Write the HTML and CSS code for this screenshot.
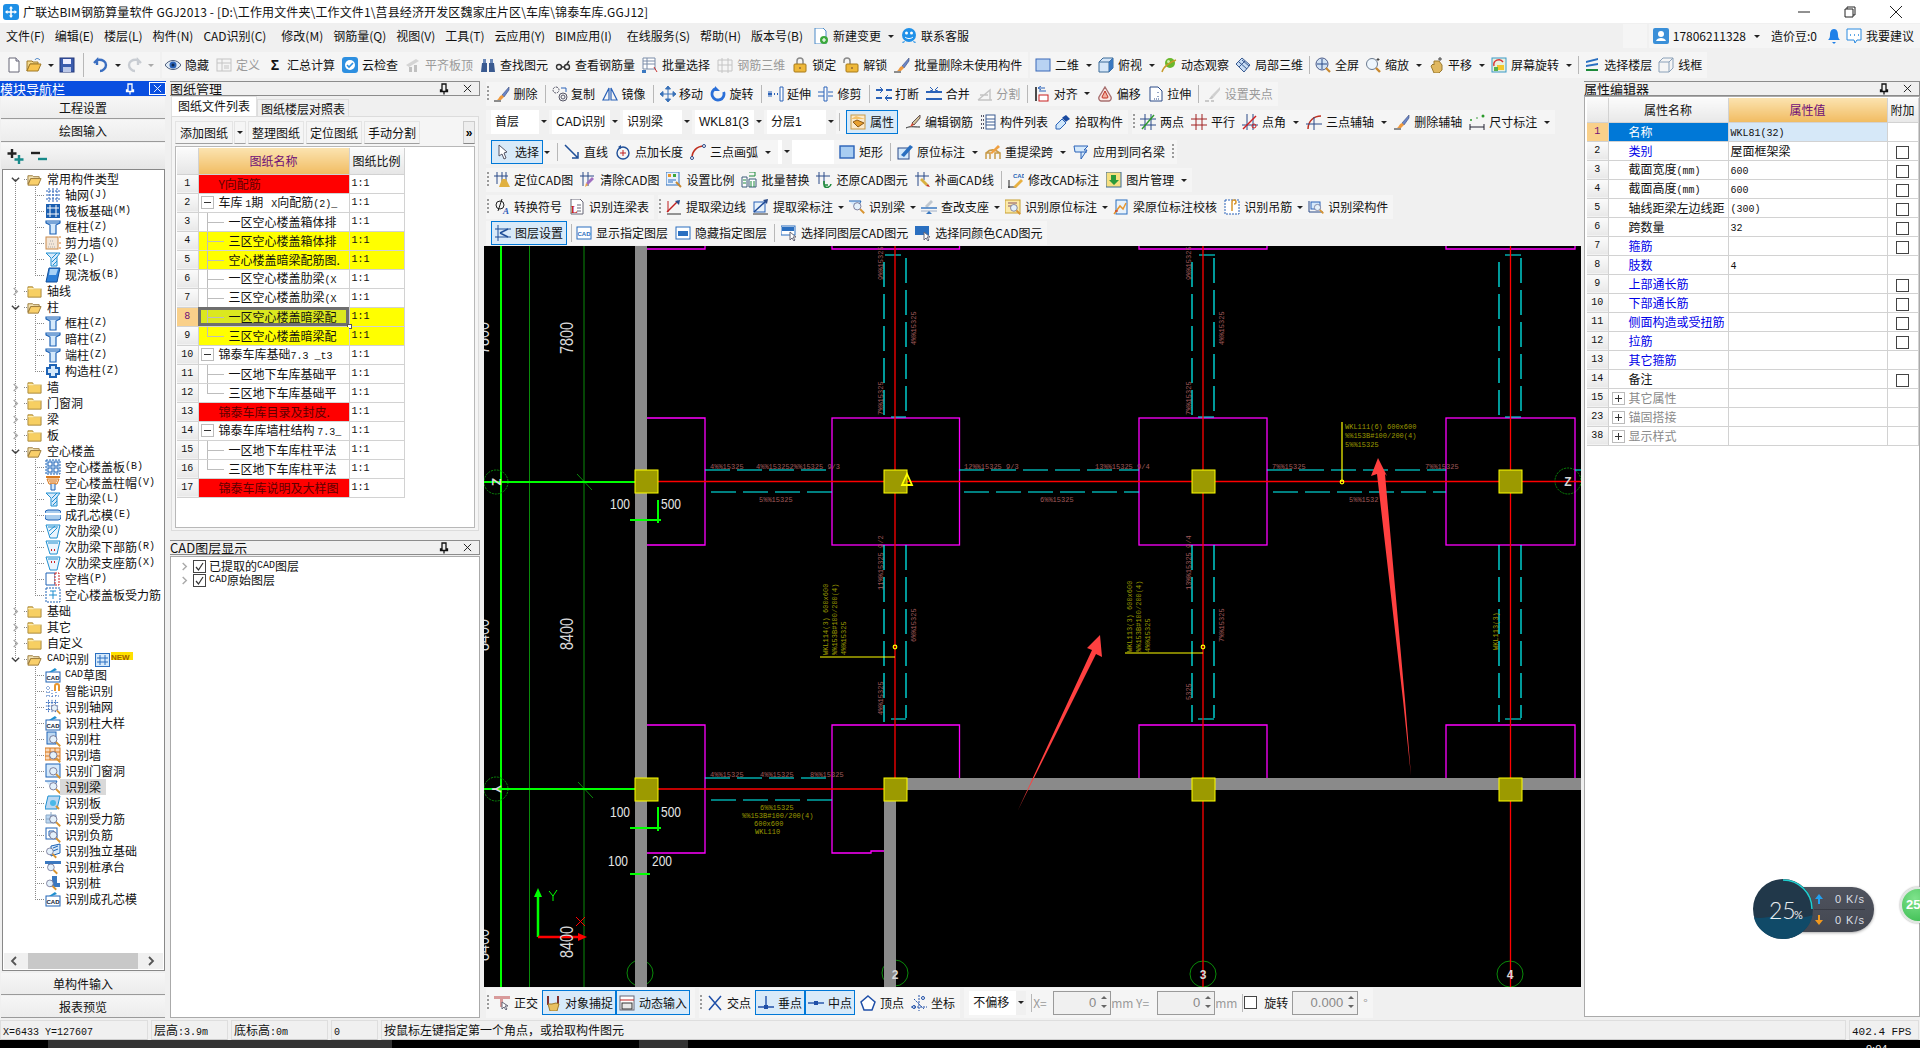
FILE: index.html
```html
<!DOCTYPE html>
<html lang="zh-CN">
<head>
<meta charset="utf-8">
<title>广联达BIM钢筋算量软件 GGJ2013</title>
<link rel="stylesheet" href="styles.css">
</head>
<body>
<svg class="defs" aria-hidden="true">
<symbol id="logo" viewBox="0 0 16 16"><rect width="16" height="16" rx="3" fill="#1e8fe6"/><path d="M8 3v10M3 8h10" stroke="#fff" stroke-width="1.6"/><path d="M8 2l-2 2.5h4zM8 14l-2-2.5h4zM2 8l2.5-2v4zM14 8l-2.5-2v4z" fill="#fff"/></symbol>
<symbol id="fo" viewBox="0 0 16 16"><path d="M1 4h5l1 1h6v2H4L1 13z" fill="#f3e3b4" stroke="#9a7a3a"/><path d="M4 7h11l-3 7H1z" fill="#f9cf6a" stroke="#9a7a3a"/></symbol>
<symbol id="fc" viewBox="0 0 16 16"><path d="M1 3h5l1 2h8v9H1z" fill="#f7cf62" stroke="#a8883e"/><path d="M1 5h14" stroke="#fff3c4"/></symbol>
<symbol id="chd" viewBox="0 0 10 10"><path d="M1 3l4 4 4-4" fill="none" stroke="#444" stroke-width="1.6"/></symbol>
<symbol id="chr" viewBox="0 0 10 10"><path d="M3 1l4 4-4 4" fill="none" stroke="#aaa" stroke-width="1.6"/></symbol>
<symbol id="axis" viewBox="0 0 16 16"><path d="M1 4h14M1 8h14M1 12h14M4 1v14M8 1v14M12 1v14" stroke="#2a62b8" stroke-dasharray="2 1" fill="none"/></symbol>
<symbol id="raft" viewBox="0 0 16 16"><rect x="1" y="1" width="14" height="14" fill="#1b5fb0"/><path d="M2 5h12M2 11h12M5 2v12M11 2v12" stroke="#fff"/></symbol>
<symbol id="col" viewBox="0 0 16 16"><path d="M1 2h14v2l-4 2v9H5V6L1 4z" fill="#d5e9fb" stroke="#1f63b5" stroke-width="1.2"/><path d="M1 4h14" stroke="#1f63b5"/></symbol>
<symbol id="wall" viewBox="0 0 16 16"><rect x="1" y="2" width="12" height="12" fill="#f3e6d8" stroke="#c98a4a"/><path d="M3 12h8M4 9h6M5 6h3" stroke="#aaa" stroke-dasharray="1 1"/><path d="M14 2h2M14 8h2M14 13h2" stroke="#d87a20"/></symbol>
<symbol id="beam" viewBox="0 0 16 16"><path d="M1 2h14l-3 4v9H6V7z" fill="#d5e9fb" stroke="#1f8fd0"/><path d="M7 7l5-5M7 11l5-5M8 14l4-4" stroke="#1f8fd0"/></symbol>
<symbol id="slab" viewBox="0 0 16 16"><path d="M4 1h11l-3 14H1z" fill="#2c7fd8" stroke="#114f9a"/><path d="M5 2h8l-2 6H4z" fill="#a8d2f6"/></symbol>
<symbol id="cols" viewBox="0 0 16 16"><path d="M4 1h8v3h3v8h-3v3H4v-3H1V4h3z" fill="#1f63b5"/><path d="M6 3h4v10H6zM3 6h10v4H3z" fill="#d5e9fb"/></symbol>
<symbol id="hslab" viewBox="0 0 16 16"><rect x="1" y="1" width="14" height="14" fill="#cfe4f8" stroke="#1f63b5" stroke-dasharray="2 1"/><rect x="3" y="3" width="4" height="4" fill="#fff" stroke="#1f63b5"/><rect x="9" y="3" width="4" height="4" fill="#fff" stroke="#1f63b5"/><rect x="3" y="9" width="4" height="4" fill="#fff" stroke="#1f63b5"/><rect x="9" y="9" width="4" height="4" fill="#fff" stroke="#1f63b5"/></symbol>
<symbol id="cap" viewBox="0 0 16 16"><path d="M1 2h14" stroke="#d87a20" stroke-width="2"/><path d="M2 4l2 5h8l2-5z" fill="#fbe4cf" stroke="#d87a20"/><path d="M4 6h8M5 8h6" stroke="#d87a20"/><path d="M6 9v6h4V9" fill="#d5e9fb" stroke="#1f63b5"/></symbol>
<symbol id="core" viewBox="0 0 16 16"><rect x="0" y="3" width="16" height="10" rx="3" fill="#a9cdee" stroke="#1f63b5"/><path d="M0 7h16" stroke="#fff" stroke-width="2"/></symbol>
<symbol id="sub" viewBox="0 0 16 16"><path d="M1 2h14l-3 13H5z" fill="#eaf4fd" stroke="#1f8fd0"/><path d="M3 4h10M4 8l6-5M5 12l7-7" stroke="#1f8fd0"/></symbol>
<symbol id="subd" viewBox="0 0 16 16"><path d="M1 2h14l-3 13H5z" fill="#eaf4fd" stroke="#1f8fd0"/><path d="M3 4h10" stroke="#1f8fd0"/><path d="M6 11h1M9 11h1" stroke="#d02020" stroke-width="2"/></symbol>
<symbol id="subu" viewBox="0 0 16 16"><path d="M1 2h14l-3 13H5z" fill="#eaf4fd" stroke="#1f8fd0"/><path d="M3 4h10" stroke="#1f8fd0"/><path d="M6 7h1M9 7h1" stroke="#d02020" stroke-width="2"/></symbol>
<symbol id="gap" viewBox="0 0 16 16"><path d="M1 2h9v12H1z" fill="#fff" stroke="#1f63b5"/><path d="M10 2h4v12h-4z" fill="#fff" stroke="#c82020" stroke-dasharray="2 1"/></symbol>
<symbol id="srb" viewBox="0 0 16 16"><rect x="1" y="1" width="14" height="14" fill="#fff" stroke="#1f63b5" stroke-dasharray="2 1"/><path d="M4 8h8M8 4v8M5 4h6" stroke="#1f8fd0"/></symbol>
<symbol id="mg" viewBox="0 0 16 16"><circle cx="6.5" cy="6.5" r="4.5" fill="#e4f1fb" stroke="#668"/><path d="M10 10l5 5" stroke="#d89430" stroke-width="2.4"/></symbol>
<symbol id="smart" viewBox="0 0 16 16"><path d="M1 5h5M1 9h5M1 13h14M3 3v12M7 7v8M11 9v6" stroke="#2a62b8" stroke-dasharray="1 2"/><path d="M9 8V3a3 3 0 0 1 6 0v5h-2V3a1 1 0 0 0-2 0v5z" fill="#e8962e"/></symbol>
<symbol id="raxis" viewBox="0 0 16 16"><use href="#axis" width="14" height="14"/><use href="#mg" x="5" y="4" width="11" height="12"/></symbol>
<symbol id="rcol" viewBox="0 0 16 16"><rect x="2" y="1" width="9" height="12" fill="#bcd8f2" stroke="#1f63b5"/><use href="#mg" x="3" y="3" width="13" height="13"/></symbol>
<symbol id="rwall" viewBox="0 0 16 16"><rect x="0" y="1" width="15" height="12" fill="#fbd9b8" stroke="#d87a20"/><path d="M0 5h15M0 9h15M5 1v12M10 1v12" stroke="#d87a20"/><use href="#mg" x="3" y="3" width="13" height="13"/></symbol>
<symbol id="rdoor" viewBox="0 0 16 16"><rect x="1" y="1" width="14" height="13" fill="#d5e9fb" stroke="#1f63b5"/><use href="#mg" x="3" y="3" width="13" height="13"/></symbol>
<symbol id="rbeam" viewBox="0 0 16 16"><path d="M0 2h12l-4 8" fill="#d5e9fb" stroke="#1f63b5"/><use href="#mg" x="3" y="2" width="13" height="13"/></symbol>
<symbol id="rslab" viewBox="0 0 16 16"><path d="M3 1h12l-3 13H0z" fill="#bcd8f2" stroke="#1f8fd0"/><circle cx="8" cy="8" r="3" fill="#4ab8e8"/><path d="M11 11l3 3" stroke="#d89430" stroke-width="2"/></symbol>
<symbol id="rreb" viewBox="0 0 16 16"><path d="M1 4h10v8H1z" fill="#bcd8f2" stroke="#8aa8c8"/><path d="M6 1v11M1 8h10" stroke="#8aa8c8"/><use href="#mg" x="3" y="3" width="13" height="13"/></symbol>
<symbol id="rneg" viewBox="0 0 16 16"><rect x="1" y="1" width="11" height="11" fill="#fff" stroke="#1f63b5"/><path d="M4 4h5v5H4z" fill="none" stroke="#1f63b5"/><use href="#mg" x="3" y="3" width="13" height="13"/></symbol>
<symbol id="rfnd" viewBox="0 0 16 16"><path d="M6 3l9-2v9l-9 3z" fill="#d5e9fb" stroke="#1f63b5"/><path d="M8 5l5-2M8 8l5-2" stroke="#1f63b5"/><use href="#mg" x="0" y="3" width="12" height="13"/></symbol>
<symbol id="rcap" viewBox="0 0 16 16"><path d="M0 2h16v3H6v5H3V5H0z" fill="#3a78c0"/><use href="#mg" x="1" y="3" width="12" height="13"/></symbol>
<symbol id="rpile" viewBox="0 0 16 16"><path d="M7 1h5v7h3v4H5V8h2z" fill="#3a78c0"/><use href="#mg" x="0" y="3" width="12" height="13"/></symbol>
<symbol id="pin" viewBox="0 0 10 12"><path d="M3 1h4v6h1.500v1.500h-7V7H3z" fill="none" stroke="currentColor" stroke-width="1.300"/><path d="M5 8v3.500" stroke="currentColor" stroke-width="1.300"/></symbol>
<symbol id="x" viewBox="0 0 10 10"><path d="M1 1l8 8M9 1L1 9" stroke="currentColor"/></symbol>
<symbol id="doc" viewBox="0 0 16 16"><path d="M3 1h7l3 3v11H3z" fill="#fff" stroke="#667"/><path d="M10 1v3h3" fill="#dde" stroke="#667"/></symbol>
<symbol id="open" viewBox="0 0 16 16"><path d="M1 4h5l1 1h5v2H4L1 14z" fill="#f4d98b" stroke="#a07a28"/><path d="M4 7h11l-3 7H1z" fill="#f8c34e" stroke="#a07a28"/><path d="M9 3c1-2 3-2 5 0" fill="none" stroke="#3a78c0"/></symbol>
<symbol id="save" viewBox="0 0 16 16"><rect x="1" y="1" width="14" height="14" fill="#3b5cad" stroke="#24387a"/><rect x="4" y="2" width="8" height="5" fill="#eef"/><rect x="4" y="10" width="8" height="5" fill="#bcc8e8"/></symbol>
<symbol id="undo" viewBox="0 0 16 16"><path d="M4 8V3L1 6M4 3c6-1 9 2 9 5s-3 6-6 6" fill="none" stroke="#3a6ec0" stroke-width="2.400"/></symbol>
<symbol id="redo" viewBox="0 0 16 16"><path d="M12 8V3l3 3M12 3C6 2 3 5 3 8s3 6 6 6" fill="none" stroke="#c8ccd2" stroke-width="2.400"/></symbol>
<symbol id="eye" viewBox="0 0 16 16"><path d="M0 8c4-6 12-6 16 0-4 6-12 6-16 0z" fill="#dfeaf5" stroke="#4a5a7a"/><circle cx="8" cy="8" r="3.500" fill="#2a62b8"/><circle cx="8" cy="8" r="1.500" fill="#102a50"/></symbol>
<symbol id="def" viewBox="0 0 16 16"><rect x="1" y="2" width="14" height="12" fill="#f4f4f4" stroke="#c4c4c4"/><path d="M1 6h14M6 2v12M8 9h5M8 11h5" stroke="#c4c4c4"/></symbol>
<symbol id="cloudc" viewBox="0 0 16 16"><rect x="0" y="0" width="16" height="16" rx="3" fill="#2d8fe0"/><circle cx="8" cy="8" r="5" fill="#fff"/><path d="M5 8l2 2 4-4" fill="none" stroke="#2d8fe0" stroke-width="1.600"/></symbol>
<symbol id="flat" viewBox="0 0 16 16"><path d="M1 8l10-6 3 2-10 6z" fill="#d4d4d4"/><path d="M4 10h3v5H4zM9 8h3v7H9z" fill="#c0c0c0"/></symbol>
<symbol id="binoc" viewBox="0 0 16 16"><path d="M2 6h5v9H1zM9 6h5l1 9H9z" fill="#3a5a90"/><path d="M3 2h3v4H3zM10 2h3v4h-3z" fill="#6a88b8"/></symbol>
<symbol id="glass" viewBox="0 0 16 16"><circle cx="4" cy="10" r="2.500" fill="none" stroke="#333" stroke-width="1.400"/><circle cx="12" cy="10" r="2.500" fill="none" stroke="#333" stroke-width="1.400"/><path d="M6.500 10h3M12 7l2-3" stroke="#333" stroke-width="1.400"/></symbol>
<symbol id="bsel" viewBox="0 0 16 16"><path d="M1 1h12v11H1zM1 4h12M1 7h12M5 1v11" fill="#fff" stroke="#7a8ca8"/><path d="M0 13h4v3H0z" fill="#3a78c0"/><path d="M12 10l3 5" stroke="#c83030"/></symbol>
<symbol id="r3d" viewBox="0 0 16 16"><path d="M1 3h14v11H1zM5 1v15M11 1v15M1 8h14" fill="none" stroke="#c4c4c4"/></symbol>
<symbol id="lock" viewBox="0 0 16 16"><path d="M5 7V4a3 3 0 0 1 6 0v3" fill="none" stroke="#8a8a8a" stroke-width="1.500"/><rect x="2" y="7" width="12" height="8" rx="1" fill="#eeb83a" stroke="#a87a18"/><path d="M8 10v2" stroke="#643"/></symbol>
<symbol id="unlock" viewBox="0 0 16 16"><path d="M1 6V4a3 3 0 0 1 6 0v3" fill="none" stroke="#8a8a8a" stroke-width="1.500"/><rect x="3" y="7" width="12" height="8" rx="1" fill="#eeb83a" stroke="#a87a18"/><path d="M9 10v2" stroke="#643"/></symbol>
<symbol id="brush" viewBox="0 0 16 16"><path d="M15 1L8 9l2 2 5-7z" fill="#6a86c8" stroke="#3a4a78" stroke-width=".6"/><path d="M8 9l2 2-3 3H3c2-1 2-4 5-5z" fill="#f09a3e"/><path d="M0 15h7" stroke="#222"/></symbol>
<symbol id="r2d" viewBox="0 0 16 16"><rect x="1" y="2" width="14" height="12" fill="#b8d2f2" stroke="#3a68b8"/></symbol>
<symbol id="cube" viewBox="0 0 16 16"><path d="M1 5l4-4h10v10l-4 4H1z" fill="#d5e6f8" stroke="#3a6a98"/><path d="M1 5h10v10M11 5l4-4" fill="none" stroke="#3a6a98"/><path d="M11 5l4-4v10l-4 4z" fill="#3a78c0"/></symbol>
<symbol id="orbit" viewBox="0 0 16 16"><circle cx="9" cy="6" r="5" fill="#6ab82c"/><circle cx="7.500" cy="4.500" r="1.500" fill="#cdeea8"/><path d="M1 15c1-5 8-10 14-12" fill="none" stroke="#c79a2a" stroke-width="1.400"/></symbol>
<symbol id="l3d" viewBox="0 0 16 16"><path d="M1 7l6-6 8 7-6 7z" fill="#c7dcf4" stroke="#3a5a90"/><path d="M4 5l8 7M7 3l7 6M4 10l6-6" stroke="#3a5a90"/></symbol>
<symbol id="full" viewBox="0 0 16 16"><circle cx="7" cy="7" r="6" fill="#d2e2f4" stroke="#4a5a88"/><path d="M7 2v10M2 7h10" stroke="#2a4a88"/><path d="M11 11l4 4" stroke="#c88830" stroke-width="2.200"/></symbol>
<symbol id="zm" viewBox="0 0 16 16"><circle cx="7" cy="7" r="5.500" fill="#eef6fd" stroke="#6a7a90"/><path d="M11 11l4 4" stroke="#c88830" stroke-width="2.400"/><path d="M13 1v3M11.500 2.500h3" stroke="#444"/></symbol>
<symbol id="hand" viewBox="0 0 16 16"><path d="M3 9l2-2 1 1V4h5l3 4v5l-3 3H6z" fill="#e0b860" stroke="#9a7a30"/><path d="M12 0v4M10 2h4" stroke="#444"/></symbol>
<symbol id="srot" viewBox="0 0 16 16"><rect x="1" y="1" width="14" height="14" fill="#e8f0e0" stroke="#3a9ac8"/><path d="M3 9a5 5 0 0 1 9-4" fill="none" stroke="#d83030" stroke-width="1.400"/><rect x="6" y="8" width="7" height="5" fill="#f2c82e"/><rect x="3" y="10" width="4" height="4" fill="#5ab04a"/></symbol>
<symbol id="floors" viewBox="0 0 16 16"><path d="M2 4l12-3v2L2 6zM2 8l12-2v2L2 10z" fill="#2a6fc0"/><path d="M2 12h12v2H2z" fill="#1d8a3a"/></symbol>
<symbol id="wire" viewBox="0 0 16 16"><path d="M1 5l4-4h10v10l-4 4H1zM1 5h10v10M11 5l4-4" fill="none" stroke="#8aa0b8"/></symbol>
<symbol id="newc" viewBox="0 0 16 16"><path d="M2 0h8l3 3v13H2z" fill="#fff" stroke="#4a8ac8"/><circle cx="11" cy="12" r="4" fill="#3ca83c"/><path d="M11 10v4M9 12h4" stroke="#fff" stroke-width="1.200"/></symbol>
<symbol id="svc" viewBox="0 0 16 16"><circle cx="8" cy="7" r="7" fill="#1f90e8"/><path d="M1 14c1 2 3 0 3-1M15 14c-1 2-3 0-3-1" fill="#1f90e8"/><circle cx="5.500" cy="5" r="1.500" fill="#fff"/><circle cx="10.500" cy="5" r="1.500" fill="#fff"/><path d="M4 9c2 2 6 2 8 0" fill="none" stroke="#fff"/></symbol>
<symbol id="user" viewBox="0 0 16 16"><rect width="16" height="16" rx="2" fill="#3a8fd8"/><circle cx="8" cy="6" r="3" fill="#fff"/><path d="M3 13c1-4 9-4 10 0z" fill="#fff"/></symbol>
<symbol id="bell" viewBox="0 0 16 16"><path d="M8 1c3 0 4 3 4 6s1 4 2 5H2c1-1 2-2 2-5s1-6 4-6z" fill="#1f80e8"/><path d="M6 14h4l-2 2z" fill="#1f80e8"/></symbol>
<symbol id="chat" viewBox="0 0 16 16"><path d="M1 1h14v11h-4l-2 3-1-3H1z" fill="#fff" stroke="#2a8ae0"/><path d="M4 7h1M8 7h1M12 7h1" stroke="#2a8ae0" stroke-width="1.400"/></symbol>
<symbol id="plusg" viewBox="0 0 18 16"><path d="M5 1v9M.5 5.500h9" stroke="#222" stroke-width="2.400"/><path d="M12 7v9M7.500 11.500h9" stroke="#188a8a" stroke-width="2.400"/></symbol>
<symbol id="minusg" viewBox="0 0 18 12"><path d="M1 3h9" stroke="#222" stroke-width="2.400"/><path d="M8 9h9" stroke="#188a8a" stroke-width="2.400"/></symbol>
<symbol id="copy" viewBox="0 0 16 16"><rect x="1" y="1" width="6" height="6" rx="3" fill="none" stroke="#556" stroke-dasharray="2 1"/><circle cx="11" cy="11" r="4" fill="none" stroke="#556"/><circle cx="11" cy="11" r="2" fill="none" stroke="#556"/><path d="M9 2h5v4" fill="none" stroke="#2a62b8"/></symbol>
<symbol id="mirror" viewBox="0 0 16 16"><path d="M7 2L1 14h6zM9 2l6 12H9z" fill="none" stroke="#2a62b8" stroke-width="1.200"/></symbol>
<symbol id="move" viewBox="0 0 16 16"><path d="M8 1v14M1 8h14M8 0L5.500 3h5zM8 16l-2.500-3h5zM0 8l3-2.500v5zM16 8l-3-2.500v5z" fill="#3a72b8" stroke="#3a72b8"/></symbol>
<symbol id="rot" viewBox="0 0 16 16"><path d="M8 2a6 6 0 1 0 6 6" fill="none" stroke="#2a6fd8" stroke-width="2.800" transform="rotate(-20 8 8)"/><path d="M5 0v5h5" fill="#2a6fd8"/></symbol>
<symbol id="extend" viewBox="0 0 16 16"><path d="M12 1h3v14h-3z" fill="#fff" stroke="#2a62b8"/><path d="M0 8h4" stroke="#2a62b8" stroke-width="2"/><path d="M6 8h1M9 8h1" stroke="#2a62b8" stroke-width="2"/><path d="M0 6h4M0 10h4" stroke="#2a62b8"/></symbol>
<symbol id="trim" viewBox="0 0 16 16"><path d="M6 1h3v14H6z" fill="#fff" stroke="#2a62b8"/><path d="M0 6h6M0 10h6M10 6h5M10 10h5" stroke="#2a62b8"/></symbol>
<symbol id="brk" viewBox="0 0 16 16"><path d="M0 4h6M10 4h6M0 12h6M10 12h6" stroke="#2a62b8" stroke-width="2"/><path d="M4 1l3 3-3 3M12 9l-3 3 3 3" fill="none" stroke="#2a62b8"/></symbol>
<symbol id="mrg" viewBox="0 0 16 16"><path d="M0 6h16M0 13h16" stroke="#2a62b8" stroke-width="2"/><path d="M4 1l3 3-3 1M12 1L9 4l3 1" fill="none" stroke="#2a62b8"/></symbol>
<symbol id="spl" viewBox="0 0 16 16"><path d="M1 14h14M1 14l12-10v10M3 9h8" fill="none" stroke="#c4c4c4" stroke-width="1.400"/></symbol>
<symbol id="align" viewBox="0 0 16 16"><path d="M2 1v14" stroke="#111" stroke-width="1.500"/><rect x="5" y="9" width="9" height="6" fill="#fff" stroke="#c82020"/><path d="M11 2H5M7 0L4 2l3 2M5 5h7" fill="none" stroke="#2a62b8"/></symbol>
<symbol id="off" viewBox="0 0 16 16"><path d="M8 1l6 10a3 3 0 0 1-2 4H4a3 3 0 0 1-2-4z" fill="#fbe8e4" stroke="#a87070" stroke-width="1.400"/><path d="M8 5l3 6a1 1 0 0 1-1 1H6a1 1 0 0 1-1-1z" fill="#f0b0a0" stroke="#c03020"/></symbol>
<symbol id="str" viewBox="0 0 16 16"><path d="M2 1h8l4 4v10H2z" fill="#fff" stroke="#2a4a88"/><path d="M10 6v2M10 10v2M6 13h6" stroke="#2a4a88" stroke-dasharray="1 1"/></symbol>
<symbol id="grip" viewBox="0 0 16 16"><path d="M0 15h4M6 15h3" stroke="#bbb" stroke-width="1.500"/><path d="M15 1L7 9l2 2 6-7z" fill="#d0d0d0"/><path d="M7 9l2 2-2 2H4z" fill="#c8c8c8"/></symbol>
<symbol id="prop" viewBox="0 0 16 16"><rect x="1" y="1" width="14" height="14" fill="#fbeacb" stroke="#c89a48"/><path d="M1 5l5-3 9 3" fill="#f4c26a"/><path d="M3 8l4-2 7 3-6 4z" fill="#e8a030" stroke="#8a5a18"/></symbol>
<symbol id="ered" viewBox="0 0 16 16"><path d="M1 14c4-2 6-1 14-1" stroke="#222" fill="none"/><path d="M15 1L7 9l2 2 6-7z" fill="#d4c49a" stroke="#655"/><path d="M7 9l2 2-4 2z" fill="#d84a30"/></symbol>
<symbol id="list" viewBox="0 0 16 16"><path d="M1 2h3M1 6h3M1 10h3M1 14h3" stroke="#556" stroke-width="2" stroke-dasharray="1 1"/><rect x="6" y="1" width="9" height="14" fill="#fff" stroke="#3a5a90"/><path d="M6 5h9M6 8h9M6 11h9" stroke="#3a5a90"/></symbol>
<symbol id="drop" viewBox="0 0 16 16"><path d="M11 1l4 4-3 2-1 1-4-4 1-1z" fill="#1a4aa0"/><path d="M7 5l4 4-6 6H1v-4z" fill="#cfe6fa" stroke="#2a62b8"/></symbol>
<symbol id="twop" viewBox="0 0 16 16"><path d="M5 0v16M11 0v16M0 5h16M0 11h16" stroke="#2a4a88"/><path d="M2 15L14 1" stroke="#2a9a2a" stroke-width="1.400"/></symbol>
<symbol id="para" viewBox="0 0 16 16"><path d="M0 5h16M0 11h16M5 0v16M11 0v16" stroke="#a02020"/></symbol>
<symbol id="pang" viewBox="0 0 16 16"><path d="M0 11h16M5 0v16M11 0v16" stroke="#2a4a88"/><path d="M1 15L14 2" stroke="#d02020" stroke-width="1.400"/><circle cx="12" cy="12" r="2" fill="none" stroke="#d02020"/></symbol>
<symbol id="arc3" viewBox="0 0 16 16"><path d="M2 15C2 7 8 2 15 2" fill="none" stroke="#c03020" stroke-width="1.500"/><path d="M0 10h16M8 3v13" stroke="#2a4a88"/></symbol>
<symbol id="dim" viewBox="0 0 16 16"><path d="M1 10v6M15 10v6M1 13h14" stroke="#223"/><circle cx="2" cy="6" r="1" fill="#2a9a2a"/><circle cx="14" cy="2" r="1.500" fill="#2a9a2a"/><circle cx="8" cy="4" r=".8" fill="#2a9a2a"/></symbol>
<symbol id="cursor" viewBox="0 0 16 16"><path d="M4 1v11l3-2 2 5 2-1-2-5 3-1z" fill="#fff" stroke="#556"/></symbol>
<symbol id="line" viewBox="0 0 16 16"><path d="M1 1l13 13M14 8v6H8" fill="none" stroke="#1f4f98" stroke-width="1.500"/></symbol>
<symbol id="ptl" viewBox="0 0 16 16"><circle cx="8" cy="9" r="6" fill="none" stroke="#1f4f98" stroke-width="1.400"/><path d="M8 6v6M5 9h6" stroke="#c02020"/><path d="M3 3l3-2v4" fill="#1f4f98"/></symbol>
<symbol id="arcd" viewBox="0 0 16 16"><path d="M2 14C2 7 7 2 14 2" fill="none" stroke="#c03020" stroke-width="1.600"/><circle cx="2" cy="14" r="1.500" fill="#fff" stroke="#2a4a88"/><circle cx="14" cy="2" r="1.500" fill="#fff" stroke="#2a4a88"/></symbol>
<symbol id="rect" viewBox="0 0 16 16"><rect x="1" y="2" width="14" height="12" fill="#a8cdf2" stroke="#2a62b8" stroke-width="1.400"/></symbol>
<symbol id="mark" viewBox="0 0 16 16"><rect x="1" y="4" width="11" height="11" fill="#d5e9fb" stroke="#2a4a88"/><path d="M4 11L13 1l3 2-9 10z" fill="#2a6fc0"/></symbol>
<symbol id="resp" viewBox="0 0 16 16"><path d="M1 15V9h4v6M10 15V9h5v6M1 9c4-4 9-4 14 0" fill="none" stroke="#c89a48" stroke-width="1.500"/><path d="M5 9l8-8 2 2-8 7z" fill="#f0a040"/></symbol>
<symbol id="apply" viewBox="0 0 16 16"><path d="M1 2h14l-4 4h3l-6 9V8H2z" fill="#d5e9fb" stroke="#2a62b8"/><path d="M8 8h6" stroke="#2a62b8"/></symbol>
<symbol id="lcad" viewBox="0 0 16 16"><path d="M0 4h14M3 0v12M8 0v12M12 0v12" stroke="#2a4a88"/><path d="M8 7h4l4 8H5z" fill="#e0b040"/></symbol>
<symbol id="ccad" viewBox="0 0 16 16"><path d="M0 4h14M3 0v14M8 0v14" stroke="#2a4a88"/><path d="M14 7L8 13l-2-2 6-6z" fill="#a070c0"/><path d="M6 11l2 2-3 2z" fill="#f0a040"/></symbol>
<symbol id="scale" viewBox="0 0 16 16"><rect x="0" y="0" width="13" height="13" fill="#eaf2fb" stroke="#2a6fc0"/><rect x="2" y="2" width="3" height="3" fill="#e8962e"/><rect x="7" y="2" width="3" height="3" fill="#3ca83c"/><path d="M2 8h8M2 10h5" stroke="#2a6fc0"/><path d="M10 10l5 5" stroke="#c88830" stroke-width="2"/></symbol>
<symbol id="repl" viewBox="0 0 16 16"><path d="M1 5h5v10H1zM8 7h7v8H8z" fill="#fff" stroke="#3a5a78"/><path d="M2 8h3M2 11h3M10 9v6M13 9v6" stroke="#1d8a3a"/><path d="M8 0h6v4H8" fill="none" stroke="#1d8a3a"/></symbol>
<symbol id="rest" viewBox="0 0 16 16"><path d="M0 4h14M3 0v12M8 0v12" stroke="#2a4a88"/><path d="M15 12a4 4 0 0 1-7 2M8 9v4h4" fill="none" stroke="#1d8a3a" stroke-width="1.600"/></symbol>
<symbol id="patch" viewBox="0 0 16 16"><path d="M0 4h14M3 0v14M9 0v8" stroke="#2a4a88"/><path d="M7 6l6 6-2 2-6-6z" fill="#d8b040"/><path d="M11 14l2-2 2 3z" fill="#c03020"/></symbol>
<symbol id="img" viewBox="0 0 16 16"><rect x="0" y="0" width="15" height="15" fill="#f6df80" stroke="#3a6a98"/><path d="M5 3h5v5h3l-5 5-5-5h2z" fill="#2a9a3a"/></symbol>
<symbol id="edge" viewBox="0 0 16 16"><path d="M1 15h14" stroke="#333"/><path d="M1 13L12 2" stroke="#c02020" stroke-width="1.500"/><path d="M14 1l-1 5-4-4z" fill="#2a4a88"/><path d="M2 2v11" stroke="#c02020"/></symbol>
<symbol id="blbl" viewBox="0 0 16 16"><rect x="1" y="3" width="11" height="10" fill="#e8f2fb" stroke="#2a62b8"/><path d="M1 13L13 2" stroke="#1d4a98" stroke-width="1.500"/><path d="M15 0l-1 5-4-4z" fill="#2a4a88"/><path d="M0 15h15" stroke="#333"/></symbol>
<symbol id="supp" viewBox="0 0 16 16"><path d="M10 1L4 7l2 2 6-6z" fill="#c0c8d0"/><path d="M0 9h16" stroke="#3a78c0" stroke-width="1.500"/><path d="M0 12h16" stroke="#a0b0c8"/><path d="M5 15l3-3 3 3" fill="#3a78c0"/></symbol>
<symbol id="omk" viewBox="0 0 16 16"><rect x="0" y="1" width="15" height="13" fill="#fbe9a8" stroke="#c8a030"/><path d="M3 4h9M3 7h5" stroke="#856"/><use href="#mg" x="4" y="4" width="12" height="12"/></symbol>
<symbol id="chk" viewBox="0 0 16 16"><rect x="3" y="1" width="11" height="14" fill="#e8f2fb" stroke="#2a6fc0"/><path d="M1 15l6-8 3 3 3-6" fill="none" stroke="#e8962e" stroke-width="1.500"/><path d="M2 12h3" stroke="#c02020"/></symbol>
<symbol id="hang" viewBox="0 0 16 16"><rect x="1" y="1" width="14" height="14" fill="#fff" stroke="#2a62b8" stroke-dasharray="2 1"/><path d="M8 3a2 2 0 1 1 2 2M8 3v9" fill="none" stroke="#d8962e" stroke-width="1.500"/></symbol>
<symbol id="rbc" viewBox="0 0 16 16"><path d="M1 2v11M1 13h14" stroke="#2a4a88"/><rect x="3" y="3" width="9" height="7" fill="#d5e9fb" stroke="#2a62b8"/><use href="#mg" x="5" y="4" width="11" height="11"/></symbol>
<symbol id="layer" viewBox="0 0 16 16"><path d="M3 0v16M0 4h16M0 12h16" stroke="#1f4f98"/><path d="M5 8l8-4M5 8l8 4" stroke="#1f4f98" stroke-width="1.400"/></symbol>
<symbol id="cadh" viewBox="0 0 16 16"><rect x="1" y="2" width="14" height="12" fill="#fff" stroke="#2a6fc0"/><rect x="3" y="6" width="10" height="5" fill="#2a6fc0"/></symbol>
<symbol id="sel1" viewBox="0 0 16 16"><rect x="0" y="1" width="14" height="9" fill="#fff" stroke="#2a6fc0"/><rect x="1" y="2" width="12" height="4" fill="#2a6fc0"/><path d="M9 7v8l2-2 2 3 1-1-2-3h3z" fill="#fff" stroke="#667"/></symbol>
<symbol id="sel2" viewBox="0 0 16 16"><rect x="0" y="1" width="14" height="9" fill="#2a6fc0"/><path d="M9 7v8l2-2 2 3 1-1-2-3h3z" fill="#fff" stroke="#667"/></symbol>
<symbol id="orth" viewBox="0 0 16 16"><path d="M0 1h16v3H9v8H6V4H0z" fill="#d89a9a"/><path d="M8 7v7l2-2 2 3 1-1-2-3h3z" fill="#fff" stroke="#667"/></symbol>
<symbol id="snap" viewBox="0 0 16 16"><path d="M3 1v9M13 1v9" stroke="#803030" stroke-width="2"/><path d="M3 9l2 7h7l2-7-3-1-4 1z" fill="#e8c060" stroke="#a07a28"/></symbol>
<symbol id="dyn" viewBox="0 0 16 16"><rect x="1" y="1" width="14" height="14" fill="#fff" stroke="#667"/><path d="M1 5h14" stroke="#c02020"/><rect x="3" y="8" width="10" height="6" fill="#e8e8e8" stroke="#333"/></symbol>
<symbol id="cross" viewBox="0 0 16 16"><path d="M2 1l12 14M14 1L2 15" stroke="#1f4fa8" stroke-width="1.500"/></symbol>
<symbol id="perp" viewBox="0 0 16 16"><path d="M8 1v12M0 12h16" stroke="#1f4fa8" stroke-width="1.400"/><rect x="6" y="10" width="4" height="4" fill="#1f4fa8"/></symbol>
<symbol id="mid" viewBox="0 0 16 16"><path d="M0 8h16" stroke="#1f4fa8" stroke-width="1.400"/><rect x="6" y="6" width="4" height="4" fill="#1f4fa8"/></symbol>
<symbol id="vert" viewBox="0 0 16 16"><path d="M8 1l7 6-3 8H4L1 7z" fill="#fff" stroke="#1f4fa8" stroke-width="1.500"/></symbol>
<symbol id="coord" viewBox="0 0 16 16"><path d="M8 0v16M0 12h16M3 4l10 10" stroke="#1f4fa8" stroke-dasharray="2 1"/><circle cx="12" cy="3" r="1.500" fill="none" stroke="#1f4fa8"/><circle cx="3" cy="12" r="1.500" fill="none" stroke="#1f4fa8"/></symbol>
</svg>

<header class="titlebar">
  <svg class="logo"><use href="#logo"/></svg>
  <span class="title">广联达BIM钢筋算量软件 GGJ2013 - [D:\工作用文件夹\工作文件1\莒县经济开发区魏家庄片区\车库\锦泰车库.GGJ12]</span>
  <span class="winbtns">
    <svg class="wb" viewBox="0 0 12 12"><path d="M0 6h12" stroke="#222"/></svg>
    <svg class="wb" viewBox="0 0 12 12"><path d="M1 3h8v8H1zM3 3V1h8v8H9" fill="none" stroke="#222"/></svg>
    <svg class="wb" viewBox="0 0 12 12"><path d="M0 0l12 12M12 0L0 12" stroke="#222"/></svg>
  </span>
</header>

<nav class="menubar">
  <span>文件(F)</span><span>编辑(E)</span><span>楼层(L)</span><span>构件(N)</span><span class="wider">CAD识别(C)</span><span>修改(M)</span><span>钢筋量(Q)</span><span>视图(V)</span><span>工具(T)</span><span>云应用(Y)</span><span class="wider">BIM应用(I)</span><span>在线服务(S)</span><span>帮助(H)</span><span>版本号(B)</span>
  <span class="t"><svg class="i"><use href="#newc"/></svg>新建变更<b class="dd"></b></span>
  <span class="t svc"><svg class="i"><use href="#svc"/></svg>联系客服</span>
  <span class="userzone">
    <span class="blank"></span>
    <span class="t userb"><svg class="i"><use href="#user"/></svg>17806211328<b class="dd"></b><em>造价豆:0</em><svg class="i"><use href="#bell"/></svg><svg class="i"><use href="#chat"/></svg>我要建议</span>
  </span>
</nav>

<div class="maintb">
  <div class="band b1">
    <svg class="i"><use href="#doc"/></svg><svg class="i"><use href="#open"/></svg><b class="dd"></b><svg class="i"><use href="#save"/></svg><i class="sp"></i><svg class="i"><use href="#undo"/></svg><b class="dd"></b><svg class="i"><use href="#redo"/></svg><b class="dd off"></b>
  </div>
  <div class="band b2">
    <span class="t"><svg class="i"><use href="#eye"/></svg>隐藏</span>
    <span class="t dis"><svg class="i"><use href="#def"/></svg>定义</span>
    <span class="t"><span class="sigma">Σ</span>汇总计算</span>
    <span class="t"><svg class="i"><use href="#cloudc"/></svg>云检查</span>
    <span class="t dis"><svg class="i"><use href="#flat"/></svg>平齐板顶</span>
    <span class="t"><svg class="i"><use href="#binoc"/></svg>查找图元</span>
    <span class="t"><svg class="i"><use href="#glass"/></svg>查看钢筋量</span>
    <span class="t"><svg class="i"><use href="#bsel"/></svg>批量选择</span>
    <span class="t dis"><svg class="i"><use href="#r3d"/></svg>钢筋三维</span>
    <span class="t"><svg class="i"><use href="#lock"/></svg>锁定</span>
    <span class="t"><svg class="i"><use href="#unlock"/></svg>解锁</span>
    <span class="t"><svg class="i"><use href="#brush"/></svg>批量删除未使用构件</span>
  </div>
  <div class="band b3">
    <span class="t"><svg class="i"><use href="#r2d"/></svg>二维<b class="dd"></b></span>
    <span class="t"><svg class="i"><use href="#cube"/></svg>俯视<b class="dd"></b></span>
    <span class="t"><svg class="i"><use href="#orbit"/></svg>动态观察</span>
    <span class="t"><svg class="i"><use href="#l3d"/></svg>局部三维</span>
    <i class="sp"></i>
    <span class="t"><svg class="i"><use href="#full"/></svg>全屏</span>
    <span class="t"><svg class="i"><use href="#zm"/></svg>缩放<b class="dd"></b></span>
    <span class="t"><svg class="i"><use href="#hand"/></svg>平移<b class="dd"></b></span>
    <span class="t"><svg class="i"><use href="#srot"/></svg>屏幕旋转<b class="dd"></b></span>
    <i class="sp"></i>
    <span class="t"><svg class="i"><use href="#floors"/></svg>选择楼层</span>
    <span class="t"><svg class="i"><use href="#wire"/></svg>线框</span>
  </div>
</div>

<main class="workspace">
  <aside class="nav">
    <div class="phead blue"><span>模块导航栏</span><svg class="pin"><use href="#pin"/></svg><svg class="close boxed"><use href="#x"/></svg></div>
    <button class="navbtn">工程设置</button>
    <button class="navbtn">绘图输入</button>
    <div class="navtools"><svg class="nt1"><use href="#plusg"/></svg><svg class="nt2"><use href="#minusg"/></svg></div>
    <div class="tree">
      <div class="rows">
      <div class="n l1"><svg class="ch"><use href="#chd"/></svg><svg class="fi"><use href="#fo"/></svg>常用构件类型</div>
      <div class="n l2"><svg class="ni"><use href="#axis"/></svg>轴网<i class="m">(J)</i></div>
      <div class="n l2"><svg class="ni"><use href="#raft"/></svg>筏板基础<i class="m">(M)</i></div>
      <div class="n l2"><svg class="ni"><use href="#col"/></svg>框柱<i class="m">(Z)</i></div>
      <div class="n l2"><svg class="ni"><use href="#wall"/></svg>剪力墙<i class="m">(Q)</i></div>
      <div class="n l2"><svg class="ni"><use href="#beam"/></svg>梁<i class="m">(L)</i></div>
      <div class="n l2 last"><svg class="ni"><use href="#slab"/></svg>现浇板<i class="m">(B)</i></div>
      <div class="n l1"><svg class="ch"><use href="#chr"/></svg><svg class="fi"><use href="#fc"/></svg>轴线</div>
      <div class="n l1"><svg class="ch"><use href="#chd"/></svg><svg class="fi"><use href="#fo"/></svg>柱</div>
      <div class="n l2"><svg class="ni"><use href="#col"/></svg>框柱<i class="m">(Z)</i></div>
      <div class="n l2"><svg class="ni"><use href="#col"/></svg>暗柱<i class="m">(Z)</i></div>
      <div class="n l2"><svg class="ni"><use href="#col"/></svg>端柱<i class="m">(Z)</i></div>
      <div class="n l2 last"><svg class="ni"><use href="#cols"/></svg>构造柱<i class="m">(Z)</i></div>
      <div class="n l1"><svg class="ch"><use href="#chr"/></svg><svg class="fi"><use href="#fc"/></svg>墙</div>
      <div class="n l1"><svg class="ch"><use href="#chr"/></svg><svg class="fi"><use href="#fc"/></svg>门窗洞</div>
      <div class="n l1"><svg class="ch"><use href="#chr"/></svg><svg class="fi"><use href="#fc"/></svg>梁</div>
      <div class="n l1"><svg class="ch"><use href="#chr"/></svg><svg class="fi"><use href="#fc"/></svg>板</div>
      <div class="n l1"><svg class="ch"><use href="#chd"/></svg><svg class="fi"><use href="#fo"/></svg>空心楼盖</div>
      <div class="n l2"><svg class="ni"><use href="#hslab"/></svg>空心楼盖板<i class="m">(B)</i></div>
      <div class="n l2"><svg class="ni"><use href="#cap"/></svg>空心楼盖柱帽<i class="m">(V)</i></div>
      <div class="n l2"><svg class="ni"><use href="#beam"/></svg>主肋梁<i class="m">(L)</i></div>
      <div class="n l2"><svg class="ni"><use href="#core"/></svg>成孔芯模<i class="m">(E)</i></div>
      <div class="n l2"><svg class="ni"><use href="#sub"/></svg>次肋梁<i class="m">(U)</i></div>
      <div class="n l2"><svg class="ni"><use href="#subd"/></svg>次肋梁下部筋<i class="m">(R)</i></div>
      <div class="n l2"><svg class="ni"><use href="#subu"/></svg>次肋梁支座筋<i class="m">(X)</i></div>
      <div class="n l2"><svg class="ni"><use href="#gap"/></svg>空档<i class="m">(P)</i></div>
      <div class="n l2 last"><svg class="ni"><use href="#srb"/></svg>空心楼盖板受力筋</div>
      <div class="n l1"><svg class="ch"><use href="#chr"/></svg><svg class="fi"><use href="#fc"/></svg>基础</div>
      <div class="n l1"><svg class="ch"><use href="#chr"/></svg><svg class="fi"><use href="#fc"/></svg>其它</div>
      <div class="n l1"><svg class="ch"><use href="#chr"/></svg><svg class="fi"><use href="#fc"/></svg>自定义</div>
      <div class="n l1"><svg class="ch"><use href="#chd"/></svg><svg class="fi"><use href="#fo"/></svg><i class="m">CAD</i>识别<svg class="nw" viewBox="0 0 38 15"><rect x=".5" y="1.500" width="14" height="13" fill="#d5e9fb" stroke="#2a6fc0"/><path d="M5 3v10M10 3v10M2 6h11M2 10h11" stroke="#2a6fc0"/><rect x="16" y="0" width="22" height="8" fill="#ffe000"/><text x="16" y="7.500" font-size="8" font-family="Liberation Sans" font-weight="700" fill="#a06000">NEW</text></svg></div>
      <div class="n l2"><svg class="ni" viewBox="0 0 16 16"><rect x="1" y="5" width="14" height="10" fill="#fff" stroke="#1f63b5"/><path d="M4 5l6-4 2 2-5 2" fill="#1f8fd0"/><text x="8" y="13" class="ict">CAD</text></svg><i class="m">CAD</i>草图</div>
      <div class="n l2"><svg class="ni"><use href="#smart"/></svg>智能识别</div>
      <div class="n l2"><svg class="ni"><use href="#raxis"/></svg>识别轴网</div>
      <div class="n l2"><svg class="ni" viewBox="0 0 16 16"><rect x="1" y="5" width="14" height="10" fill="#fff" stroke="#1f63b5"/><path d="M4 5l6-4 2 2-5 2" fill="#1f8fd0"/><text x="8" y="13" class="ict">CAD</text></svg>识别柱大样</div>
      <div class="n l2"><svg class="ni"><use href="#rcol"/></svg>识别柱</div>
      <div class="n l2"><svg class="ni"><use href="#rwall"/></svg>识别墙</div>
      <div class="n l2"><svg class="ni"><use href="#rdoor"/></svg>识别门窗洞</div>
      <div class="n l2 sel"><svg class="ni"><use href="#rbeam"/></svg><span>识别梁</span></div>
      <div class="n l2"><svg class="ni"><use href="#rslab"/></svg>识别板</div>
      <div class="n l2"><svg class="ni"><use href="#rreb"/></svg>识别受力筋</div>
      <div class="n l2"><svg class="ni"><use href="#rneg"/></svg>识别负筋</div>
      <div class="n l2"><svg class="ni"><use href="#rfnd"/></svg>识别独立基础</div>
      <div class="n l2"><svg class="ni"><use href="#rcap"/></svg>识别桩承台</div>
      <div class="n l2"><svg class="ni"><use href="#rpile"/></svg>识别桩</div>
      <div class="n l2 last"><svg class="ni" viewBox="0 0 16 16"><rect x="1" y="5" width="14" height="10" fill="#fff" stroke="#1f63b5"/><path d="M4 5l6-4 2 2-5 2" fill="#1f8fd0"/><text x="8" y="13" class="ict">CAD</text></svg>识别成孔芯模</div>
      </div>
      <div class="hscroll"><svg class="sa" viewBox="0 0 10 10"><path d="M7 1L3 5l4 4" fill="none" stroke="#555" stroke-width="1.800"/></svg><span class="thumb"></span><svg class="sa" viewBox="0 0 10 10"><path d="M3 1l4 4-4 4" fill="none" stroke="#555" stroke-width="1.800"/></svg></div>
    </div>
    <button class="navbtn gapt">单构件输入</button>
    <button class="navbtn">报表预览</button>
  </aside>

  <section class="docs">
    <div class="phead"><span>图纸管理</span><svg class="pin"><use href="#pin"/></svg><svg class="close"><use href="#x"/></svg></div>
    <div class="tabs"><span class="tab on">图纸文件列表</span><span class="tab">图纸楼层对照表</span></div>
    <div class="docbody">
      <div class="doctools">
        <button class="dbtn w1">添加图纸</button><button class="dbtn w2"><b class="dd"></b></button><button class="dbtn">整理图纸</button><button class="dbtn">定位图纸</button><button class="dbtn">手动分割</button>
        <button class="more">»</button>
      </div>
      <div class="tablewrap">
        <table class="dt">
          <colgroup><col class="c1"><col class="c2"><col class="c3"></colgroup>
          <thead><tr><th class="ix"></th><th class="or">图纸名称</th><th>图纸比例</th></tr></thead>
          <tbody>
            <tr class="red"><td class="ix">1</td><td class="nm root"><span class="indent"></span>Y向配筋</td><td class="sc">1:1</td></tr>
            <tr><td class="ix">2</td><td class="nm root"><span class="box"></span>车库 <i class="m">1</i>期&nbsp; &nbsp;<i class="m">X</i>向配筋<i class="m">(2)_</i></td><td class="sc">1:1</td></tr>
            <tr><td class="ix">3</td><td class="nm ch1">一区空心楼盖箱体排</td><td class="sc">1:1</td></tr>
            <tr class="yel"><td class="ix">4</td><td class="nm ch1">三区空心楼盖箱体排</td><td class="sc">1:1</td></tr>
            <tr class="yel"><td class="ix">5</td><td class="nm ch1">空心楼盖暗梁配筋图.</td><td class="sc">1:1</td></tr>
            <tr><td class="ix">6</td><td class="nm ch1">一区空心楼盖肋梁<i class="m">(X</i></td><td class="sc">1:1</td></tr>
            <tr><td class="ix">7</td><td class="nm ch1">三区空心楼盖肋梁<i class="m">(X</i></td><td class="sc">1:1</td></tr>
            <tr class="yel cur"><td class="ix">8</td><td class="nm ch1">一区空心楼盖暗梁配<span class="handle"></span></td><td class="sc">1:1</td></tr>
            <tr class="yel"><td class="ix">9</td><td class="nm ch1 end">三区空心楼盖暗梁配</td><td class="sc">1:1</td></tr>
            <tr><td class="ix">10</td><td class="nm root"><span class="box"></span>锦泰车库基础<i class="m">7.3 _t3</i></td><td class="sc">1:1</td></tr>
            <tr><td class="ix">11</td><td class="nm ch1">一区地下车库基础平</td><td class="sc">1:1</td></tr>
            <tr><td class="ix">12</td><td class="nm ch1 end">三区地下车库基础平</td><td class="sc">1:1</td></tr>
            <tr class="red"><td class="ix">13</td><td class="nm root"><span class="indent"></span>锦泰车库目录及封皮.</td><td class="sc">1:1</td></tr>
            <tr><td class="ix">14</td><td class="nm root"><span class="box"></span>锦泰车库墙柱结构 <i class="m">7.3_</i></td><td class="sc">1:1</td></tr>
            <tr><td class="ix">15</td><td class="nm ch1">一区地下车库柱平法</td><td class="sc">1:1</td></tr>
            <tr><td class="ix">16</td><td class="nm ch1 end">三区地下车库柱平法</td><td class="sc">1:1</td></tr>
            <tr class="red"><td class="ix">17</td><td class="nm root"><span class="indent"></span>锦泰车库说明及大样图</td><td class="sc">1:1</td></tr>
          </tbody>
        </table>
      </div>
    </div>
    <div class="phead cadh"><span>CAD图层显示</span><svg class="pin"><use href="#pin"/></svg><svg class="close"><use href="#x"/></svg></div>
    <div class="layers">
      <div class="lr"><svg class="ch"><use href="#chr"/></svg><svg class="cbx" viewBox="0 0 13 13"><rect x=".5" y=".5" width="12" height="12" fill="#fff" stroke="#444"/><path d="M3 7l2.500 3L10 3" fill="none" stroke="#333" stroke-width="1.200"/></svg>已提取的<i class="m">CAD</i>图层</div>
      <div class="lr"><svg class="ch"><use href="#chr"/></svg><svg class="cbx" viewBox="0 0 13 13"><rect x=".5" y=".5" width="12" height="12" fill="#fff" stroke="#444"/><path d="M3 7l2.500 3L10 3" fill="none" stroke="#333" stroke-width="1.200"/></svg><i class="m">CAD</i>原始图层</div>
    </div>
  </section>

  <section class="center">
    <div class="ctools">
      <div class="trow r1">
        <div class="band"><i class="grip"></i>
          <span class="t"><svg class="i"><use href="#brush"/></svg>删除</span><i class="sp"></i>
          <span class="t"><svg class="i"><use href="#copy"/></svg>复制</span>
          <span class="t"><svg class="i"><use href="#mirror"/></svg>镜像</span><i class="sp"></i>
          <span class="t"><svg class="i"><use href="#move"/></svg>移动</span>
          <span class="t"><svg class="i"><use href="#rot"/></svg>旋转</span><i class="sp"></i>
          <span class="t"><svg class="i"><use href="#extend"/></svg>延伸</span>
          <span class="t"><svg class="i"><use href="#trim"/></svg>修剪</span><i class="sp"></i>
          <span class="t"><svg class="i"><use href="#brk"/></svg>打断</span>
          <span class="t"><svg class="i"><use href="#mrg"/></svg>合并</span>
          <span class="t dis"><svg class="i"><use href="#spl"/></svg>分割</span><i class="sp"></i>
          <span class="t"><svg class="i"><use href="#align"/></svg>对齐<b class="dd"></b></span>
          <span class="t"><svg class="i"><use href="#off"/></svg>偏移</span>
          <span class="t"><svg class="i"><use href="#str"/></svg>拉伸</span><i class="sp"></i>
          <span class="t dis"><svg class="i"><use href="#grip"/></svg>设置夹点</span>
        </div>
      </div>
      <div class="trow">
        <div class="band tight">
          <span class="combo c58">首层<b class="cdrop"></b></span>
          <span class="combo c68"><span>CAD识别</span><b class="cdrop"></b></span>
          <span class="combo c69">识别梁<b class="cdrop"></b></span>
          <span class="combo c69">WKL81(3<b class="cdrop"></b></span>
          <span class="combo c69">分层1<b class="cdrop"></b></span>
          <i class="sp"></i>
          <span class="t act"><svg class="i"><use href="#prop"/></svg>属性</span>
          <span class="t"><svg class="i"><use href="#ered"/></svg>编辑钢筋</span>
          <span class="t"><svg class="i"><use href="#list"/></svg>构件列表</span>
          <span class="t"><svg class="i"><use href="#drop"/></svg>拾取构件</span>
        </div>
        <div class="band"><i class="grip"></i>
          <span class="t"><svg class="i"><use href="#twop"/></svg>两点</span>
          <span class="t"><svg class="i"><use href="#para"/></svg>平行</span>
          <span class="t"><svg class="i"><use href="#pang"/></svg>点角<b class="dd"></b></span>
          <span class="t"><svg class="i"><use href="#arc3"/></svg>三点辅轴<b class="dd"></b></span>
          <span class="t"><svg class="i"><use href="#brush"/></svg>删除辅轴</span>
          <span class="t"><svg class="i"><use href="#dim"/></svg>尺寸标注<b class="dd"></b></span>
        </div>
      </div>
      <div class="trow">
        <div class="band tight">
          <span class="t act"><svg class="i"><use href="#cursor"/></svg>选择</span><b class="dd"></b><i class="sp"></i>
          <span class="t"><svg class="i"><use href="#line"/></svg>直线</span>
          <span class="t"><svg class="i"><use href="#ptl"/></svg>点加长度</span>
          <span class="t"><svg class="i"><use href="#arcd"/></svg>三点画弧<b class="dd"></b></span>
          <span class="combo c56"><b class="cdrop"></b></span>
          <span class="t"><svg class="i"><use href="#rect"/></svg>矩形</span><i class="sp"></i>
          <span class="t"><svg class="i"><use href="#mark"/></svg>原位标注<b class="dd"></b></span>
          <span class="t"><svg class="i"><use href="#resp"/></svg>重提梁跨<b class="dd"></b></span>
          <span class="t"><svg class="i"><use href="#apply"/></svg>应用到同名梁</span>
          <i class="grip"></i>
        </div>
      </div>
      <div class="trow">
        <div class="band"><i class="grip"></i>
          <span class="t"><svg class="i"><use href="#lcad"/></svg>定位CAD图</span>
          <span class="t"><svg class="i"><use href="#ccad"/></svg>清除CAD图</span>
          <span class="t"><svg class="i"><use href="#scale"/></svg>设置比例</span>
          <span class="t"><svg class="i"><use href="#repl"/></svg>批量替换</span>
          <span class="t"><svg class="i"><use href="#rest"/></svg>还原CAD图元</span>
          <span class="t"><svg class="i"><use href="#patch"/></svg>补画CAD线</span><i class="sp"></i>
          <span class="t"><svg class="i" viewBox="0 0 16 16"><text x="5" y="6" class="ict2">CAD</text><path d="M1 8v8M0 15h8" stroke="#222"/><path d="M5 15l8-8 2 2-7 7z" fill="#e8b040"/></svg>修改CAD标注</span>
          <span class="t"><svg class="i"><use href="#img"/></svg>图片管理<b class="dd"></b></span>
        </div>
      </div>
      <div class="trow">
        <div class="band"><i class="grip"></i>
          <span class="t"><svg class="i" viewBox="0 0 16 16"><circle cx="6" cy="6" r="4" fill="none" stroke="#222"/><path d="M8 0L4 12" stroke="#222"/><text x="9" y="15" class="ict3">A</text></svg>转换符号</span>
          <span class="t"><svg class="i" viewBox="0 0 16 16"><path d="M2 0h9l3 3v12H2z" fill="#fff" stroke="#667"/><text x="2" y="14" class="ict4">L</text><path d="M8 6h4M8 9h4M8 12h4" stroke="#667"/></svg>识别连梁表</span>
        </div>
        <div class="band ndd"><i class="grip"></i>
          <span class="t"><svg class="i"><use href="#edge"/></svg>提取梁边线</span>
          <span class="t"><svg class="i"><use href="#blbl"/></svg>提取梁标注<b class="dd"></b></span>
          <span class="t"><svg class="i"><use href="#rbeam"/></svg>识别梁<b class="dd"></b></span>
          <span class="t"><svg class="i"><use href="#supp"/></svg>查改支座<b class="dd"></b></span>
          <span class="t"><svg class="i"><use href="#omk"/></svg>识别原位标注<b class="dd"></b></span>
          <span class="t"><svg class="i"><use href="#chk"/></svg>梁原位标注校核</span>
          <span class="t"><svg class="i"><use href="#hang"/></svg>识别吊筋<b class="dd"></b></span>
          <span class="t"><svg class="i"><use href="#rbc"/></svg>识别梁构件</span>
        </div>
      </div>
      <div class="trow">
        <div class="band tight">
          <span class="t act"><svg class="i"><use href="#layer"/></svg>图层设置</span><i class="sp"></i>
          <span class="t"><svg class="i" viewBox="0 0 16 16"><rect x="1" y="2" width="14" height="12" fill="#fff" stroke="#2a6fc0"/><text x="8" y="10.500" class="ict5">CAD</text></svg>显示指定图层</span>
          <span class="t"><svg class="i"><use href="#cadh"/></svg>隐藏指定图层</span><i class="sp"></i>
          <span class="t"><svg class="i"><use href="#sel1"/></svg>选择同图层CAD图元</span>
          <span class="t"><svg class="i"><use href="#sel2"/></svg>选择同颜色CAD图元</span>
        </div>
      </div>
    </div>

    <svg class="canvas" viewBox="484 246 1097 741">
      <defs>
        <g id="sq"><rect x="0" y="0" width="23" height="23" fill="#9c9a00" stroke="#ffff00"/></g>
      </defs>
      <g class="axisg">
        <path d="M501 246V987" stroke="#00ff00" stroke-width="2"/>
        <path d="M529.500 246V987M584 246V987" stroke="#0a8a0a"/>
        <path d="M577 474l15 16M578 782l15 16" stroke="#0a8a0a"/>
        <circle cx="496" cy="482" r="12" fill="none" stroke="#0a8a0a" stroke-dasharray="2 1"/>
        <circle cx="496" cy="789" r="12" fill="none" stroke="#0a8a0a" stroke-dasharray="2 1"/>
        <circle cx="1568" cy="481" r="13" fill="none" stroke="#0a8a0a" stroke-dasharray="2 1"/>
        <circle cx="640" cy="973" r="13" fill="none" stroke="#0a8a0a"/>
        <circle cx="895" cy="973" r="13" fill="none" stroke="#0a8a0a"/>
        <circle cx="1203" cy="974" r="13" fill="none" stroke="#0a8a0a"/>
        <circle cx="1510" cy="974" r="13" fill="none" stroke="#0a8a0a"/>
      </g>
      <g class="mag" fill="none" stroke="#ff00ff" stroke-width="1.300">
        <path d="M647 249H705V240M832 240V249H959.500V240M1139 240V249H1267V240M1446 240V249H1575V240"/>
        <path d="M647 418H705V545H647"/>
        <rect x="832" y="418" width="127.500" height="127"/>
        <rect x="1139" y="418" width="128" height="127"/>
        <rect x="1446" y="418" width="129" height="127"/>
        <path d="M647 725H705V853H647"/>
        <path d="M884 851H871V853H832V725H959.500V778"/>
        <path d="M1139 778V725H1267V778M1446 778V725H1575V778"/>
      </g>
      <g fill="none" stroke="#00ffff" stroke-width="1.200">
        <g stroke-dasharray="25 7">
          <path d="M705 470H832M959 470H1139M1267 470H1446M1575 470H1581"/>
          <path d="M711 492H832M964 492H1139M1273 492H1446"/>
          <path d="M705 778H832M711 800H832"/>
          <path d="M884 262V417M906 258V417M884 545V722M906 545V718"/>
          <path d="M1192 262V417M1214 258V417M1192 545V722M1214 545V718"/>
          <path d="M1499 262V417M1521 258V417M1499 545V722M1521 545V718"/>
        </g>
        <path d="M885 255h16M891 417h15M891 719h15M1199 255h16M1198 417h16M1198 719h16M1505 255h16M1505 417h16M1505 719h16"/>
      </g>
      <g fill="none" stroke="#ff0000" stroke-width="1.300">
        <path d="M658 481.500H1581M658 789H884"/>
        <path d="M895 246V778M1203 246V987M1510.500 246V987"/>
      </g>
      <g fill="#8a8a8a">
        <rect x="635" y="246" width="12" height="741"/>
        <rect x="907" y="778" width="674" height="12"/>
        <rect x="884" y="801" width="12" height="186"/>
      </g>
      <path d="M484 482H635M484 789H635" stroke="#00ff00" stroke-width="2"/>
      <use href="#sq" x="635" y="470"/><use href="#sq" x="884" y="470"/><use href="#sq" x="1192" y="470"/><use href="#sq" x="1499" y="470"/>
      <use href="#sq" x="635" y="778"/><use href="#sq" x="884" y="778"/><use href="#sq" x="1192" y="778"/><use href="#sq" x="1499" y="778"/>
      <path d="M907 474l-5 11h10z" fill="none" stroke="#ffff00" stroke-width="1.800"/>
      <g class="yline" fill="none" stroke="#ffff00" stroke-width="1.200">
        <path d="M820 657H895M1125 653H1203M1342 422V482"/>
        <circle cx="895" cy="647" r="1.800"/><circle cx="1203" cy="647" r="1.800"/><circle cx="1342" cy="482" r="1.800"/>
      </g>
      <g stroke="#00ff00" stroke-width="2" fill="none">
        <path d="M658 500V523M630 520H661M658 807V831M630 828H661M630 874H650"/>
        <path d="M538 937V892" stroke-width="2.500"/>
        <path d="M538 888l-4 9h8z" fill="#00ff00" stroke="none"/>
        <path d="M549 891l4 5 4-6M553 896v5" stroke-width="1"/>
      </g>
      <path d="M538 937H580" stroke="#ff0000" stroke-width="2.500"/>
      <path d="M587 937l-9-4v8z" fill="#ff0000"/>
      <path d="M576 917l9 9M585 917l-9 9" stroke="#ff0000"/>
      <g class="cw">
        <text x="610" y="509" textLength="20" lengthAdjust="spacingAndGlyphs">100</text><text x="661" y="509" textLength="20" lengthAdjust="spacingAndGlyphs">500</text>
        <text x="610" y="817" textLength="20" lengthAdjust="spacingAndGlyphs">100</text><text x="661" y="817" textLength="20" lengthAdjust="spacingAndGlyphs">500</text>
        <text x="608" y="866" textLength="20" lengthAdjust="spacingAndGlyphs">100</text><text x="652" y="866" textLength="20" lengthAdjust="spacingAndGlyphs">200</text>
      </g>
      <g class="cbig">
        <text transform="rotate(-90 573 338)" x="573" y="338" text-anchor="middle" textLength="32" lengthAdjust="spacingAndGlyphs">7800</text>
        <text transform="rotate(-90 573 634)" x="573" y="634" text-anchor="middle" textLength="32" lengthAdjust="spacingAndGlyphs">8400</text>
        <text transform="rotate(-90 573 942)" x="573" y="942" text-anchor="middle" textLength="32" lengthAdjust="spacingAndGlyphs">8400</text>
        <text transform="rotate(-90 489 338)" x="489" y="338" text-anchor="middle" textLength="32" lengthAdjust="spacingAndGlyphs">7800</text>
        <text transform="rotate(-90 489 635)" x="489" y="635" text-anchor="middle" textLength="32" lengthAdjust="spacingAndGlyphs">8400</text>
        <text transform="rotate(-90 489 945)" x="489" y="945" text-anchor="middle" textLength="32" lengthAdjust="spacingAndGlyphs">8400</text>
      </g>
      <g class="axt">
        <text x="496" y="486" transform="rotate(90 496 482)" text-anchor="middle">Z</text>
        <text x="496" y="793" transform="rotate(90 496 789)" text-anchor="middle">Y</text>
        <text x="1568" y="486" text-anchor="middle">Z</text>
        <text x="895" y="979" text-anchor="middle">2</text>
        <text x="1203" y="979" text-anchor="middle">3</text>
        <text x="1510" y="979" text-anchor="middle">4</text>
      </g>
      <g class="rl">
        <text x="710" y="469">4%%15325</text><text x="756" y="469">4%%153252%%15325 9/3</text>
        <text x="964" y="469">12%%15325 9/3</text><text x="1095" y="469">13%%15325 9/4</text>
        <text x="1272" y="469">7%%15325</text><text x="1425" y="469">7%%15325</text>
        <text x="759" y="502">5%%15325</text><text x="1040" y="502">6%%15325</text><text x="1349" y="502">5%%1532</text>
        <text x="710" y="777">4%%15325</text><text x="760" y="777">4%%15325</text><text x="810" y="777">8%%15325</text>
        <g class="rv">
          <text transform="rotate(-90 883 280)" x="883" y="280">9%%15325</text>
          <text transform="rotate(-90 916 345)" x="916" y="345">4%%15325</text>
          <text transform="rotate(-90 883 415)" x="883" y="415">7%%15325</text>
          <text transform="rotate(-90 883 590)" x="883" y="590">11%%15325 9/2</text>
          <text transform="rotate(-90 916 642)" x="916" y="642">6%%15325</text>
          <text transform="rotate(-90 883 715)" x="883" y="715">4%%15325</text>
          <text transform="rotate(-90 1191 280)" x="1191" y="280">9%%15325</text>
          <text transform="rotate(-90 1224 345)" x="1224" y="345">4%%15325</text>
          <text transform="rotate(-90 1191 415)" x="1191" y="415">7%%15325</text>
          <text transform="rotate(-90 1191 590)" x="1191" y="590">13%%15325 9/4</text>
          <text transform="rotate(-90 1224 642)" x="1224" y="642">7%%15325</text>
          <text transform="rotate(-90 1191 700)" x="1191" y="700">5325</text>
        </g>
      </g>
      <g class="yl">
        <text x="1345" y="429">WKL111(6)  600x600</text><text x="1345" y="438">%%153B#100/200(4)</text><text x="1345" y="447">5%%15325</text>
        <text x="760" y="810">6%%15325</text><text x="742" y="818">%%153B#100/200(4)</text><text x="754" y="826">600x600</text><text x="755" y="834">WKL110</text>
        <text transform="rotate(-90 828 655)" x="828" y="655">WKL114(3)  600x600</text>
        <text transform="rotate(-90 837 655)" x="837" y="655">%%153B#100/200(4)</text>
        <text transform="rotate(-90 846 655)" x="846" y="655">4%%15325</text>
        <text transform="rotate(-90 1132 652)" x="1132" y="652">WKL113(3)  600x600</text>
        <text transform="rotate(-90 1141 652)" x="1141" y="652">%%153B#100/200(4)</text>
        <text transform="rotate(-90 1150 652)" x="1150" y="652">4%%15325</text>
        <text transform="rotate(-90 1498 650)" x="1498" y="650">WKL113(3)</text>
      </g>
      <path d="M1100 635L1087 648 1092 650 1018 810 1096 654 1102 657z" fill="#ff4040"/>
      <path d="M1378 458L1371 476 1377 474 1403 700 1411 776 1405 700 1385 474 1387 476z" fill="#ff4040"/>
    </svg>

    <div class="btools">
      <div class="band"><i class="grip"></i>
        <span class="t"><svg class="i"><use href="#orth"/></svg>正交</span>
        <span class="tgroup"><span class="t act"><svg class="i"><use href="#snap"/></svg>对象捕捉</span><span class="t act"><svg class="i"><use href="#dyn"/></svg>动态输入</span></span>
      </div>
      <div class="band"><i class="grip"></i>
        <span class="t"><svg class="i"><use href="#cross"/></svg>交点</span>
        <span class="tgroup"><span class="t act"><svg class="i"><use href="#perp"/></svg>垂点</span><span class="t act"><svg class="i"><use href="#mid"/></svg>中点</span></span>
        <span class="t"><svg class="i"><use href="#vert"/></svg>顶点</span>
        <span class="t"><svg class="i"><use href="#coord"/></svg>坐标</span>
      </div>
      <div class="band tight small">
        <span class="combo c57">不偏移<b class="cdrop"></b></span><i class="sp"></i>
        <span class="lab dis l20">X=</span><span class="num">0<b class="spin"></b></span><span class="lab dis l46">mm Y=</span><span class="num">0<b class="spin"></b></span><span class="lab dis l27">mm</span><i class="sp"></i><span class="cb"></span>
        <span class="lab pad">旋转</span><span class="num wide">0.000<b class="spin"></b></span><span class="lab dis deg">°</span>
      </div>
    </div>
  </section>

  <aside class="props">
    <div class="phead"><span>属性编辑器</span><svg class="pin"><use href="#pin"/></svg><svg class="close"><use href="#x"/></svg></div>
    <div class="propbody">
      <table class="pt">
        <colgroup><col class="p1"><col class="p2"><col class="p3"><col class="p4"></colgroup>
        <thead><tr><th class="ix"></th><th class="ctr">属性名称</th><th class="or">属性值</th><th>附加</th></tr></thead>
        <tbody>
          <tr class="psel"><td class="ix">1</td><td class="nm">名称</td><td class="v"><i class="m">WKL81(32)</i></td><td></td></tr>
          <tr><td class="ix">2</td><td class="nm bl">类别</td><td class="v">屋面框架梁</td><td><span class="cb"></span></td></tr>
          <tr><td class="ix">3</td><td class="nm">截面宽度<i class="m">(mm)</i></td><td class="v"><i class="m">600</i></td><td><span class="cb"></span></td></tr>
          <tr><td class="ix">4</td><td class="nm">截面高度<i class="m">(mm)</i></td><td class="v"><i class="m">600</i></td><td><span class="cb"></span></td></tr>
          <tr><td class="ix">5</td><td class="nm">轴线距梁左边线距</td><td class="v"><i class="m">(300)</i></td><td><span class="cb"></span></td></tr>
          <tr><td class="ix">6</td><td class="nm">跨数量</td><td class="v"><i class="m">32</i></td><td><span class="cb"></span></td></tr>
          <tr><td class="ix">7</td><td class="nm bl">箍筋</td><td class="v"></td><td><span class="cb"></span></td></tr>
          <tr><td class="ix">8</td><td class="nm bl">肢数</td><td class="v"><i class="m">4</i></td><td></td></tr>
          <tr><td class="ix">9</td><td class="nm bl">上部通长筋</td><td class="v"></td><td><span class="cb"></span></td></tr>
          <tr><td class="ix">10</td><td class="nm bl">下部通长筋</td><td class="v"></td><td><span class="cb"></span></td></tr>
          <tr><td class="ix">11</td><td class="nm bl">侧面构造或受扭筋</td><td class="v"></td><td><span class="cb"></span></td></tr>
          <tr><td class="ix">12</td><td class="nm bl">拉筋</td><td class="v"></td><td><span class="cb"></span></td></tr>
          <tr><td class="ix">13</td><td class="nm bl">其它箍筋</td><td class="v"></td><td></td></tr>
          <tr><td class="ix">14</td><td class="nm">备注</td><td class="v"></td><td><span class="cb"></span></td></tr>
          <tr><td class="ix">15</td><td class="nm gr"><span class="plus"></span>其它属性</td><td class="v"></td><td></td></tr>
          <tr><td class="ix">23</td><td class="nm gr"><span class="plus"></span>锚固搭接</td><td class="v"></td><td></td></tr>
          <tr><td class="ix">38</td><td class="nm gr"><span class="plus"></span>显示样式</td><td class="v"></td><td></td></tr>
        </tbody>
      </table>
    </div>
  </aside>
</main>

<footer class="status">
  <span class="s1"><i class="m">X=6433 Y=127607</i></span>
  <span class="s2">层高<i class="m">:3.9m</i></span>
  <span class="s3">底标高<i class="m">:0m</i></span>
  <span class="s4"><i class="m">0</i></span>
  <span class="s5">按鼠标左键指定第一个角点，或拾取构件图元</span>
  <span class="s6"><i class="m m12">402.4 FPS</i></span>
</footer>
<div class="taskbar"><span class="tb1"></span><span class="tb2"></span><span class="clock">9:04</span></div>

<div class="netw">
  <div class="pill"><span class="rate"><svg viewBox="0 0 10 10"><path d="M5 0l4 5H6v5H4V5H1z" fill="#22a0f0"/></svg>0 K/s</span><span class="rate"><svg viewBox="0 0 10 10"><path d="M5 10L1 5h3V0h2v5h3z" fill="#f0981e"/></svg>0 K/s</span></div>
  <svg class="dial" viewBox="0 0 60 60"><circle cx="30" cy="30" r="30" fill="#21384a"/><path d="M.9 38C8 41 18 36 26 38s24 2 33.500-2C57 50 44 60 30 60S3 50 .9 38z" fill="#104a68"/><path d="M30 1a29 29 0 0 1 29 29" fill="none" stroke="#1fd0d0" stroke-width="1.500"/><text x="16" y="40" class="d1">25</text><text x="41" y="40" class="d2">%</text></svg>
</div>
<div class="ball">25</div>
</body>
</html>
```
FILE: styles.css
```css
* { box-sizing: border-box; }
html, body { margin: 0; height: 100%; }
body {
  width: 1920px; height: 1048px; overflow: hidden; position: relative;
  background: #f0f0f0; color: #111;
  font: 12px/16px "Noto Sans CJK SC", "Liberation Sans", sans-serif;
}
.defs { position: absolute; width: 0; height: 0; }
i, em { font-style: normal; }
svg { flex: none; }
.m { font: 10px/12px "Liberation Mono", monospace; }
.m12 { font-size: 11px; }
.ict { font: 700 6px "Liberation Sans", sans-serif; text-anchor: middle; fill: #123; }
.ict2 { font: 700 6px "Liberation Sans", sans-serif; fill: #1f63b5; }
.ict3 { font: italic 700 9px "Liberation Serif", serif; fill: #2a5ab8; }
.ict4 { font: 700 10px "Liberation Serif", serif; fill: #c02020; }
.ict5 { font: 700 6px "Liberation Sans", sans-serif; text-anchor: middle; fill: #2a6fc0; }

.titlebar { height: 23px; background: #fff; display: flex; align-items: center; padding-left: 3px; }
.logo { width: 16px; height: 16px; }
.title { margin-left: 4px; letter-spacing: .13px; }
.winbtns { margin-left: auto; display: flex; gap: 34px; padding-right: 18px; }
.wb { width: 12px; height: 12px; }

.menubar { height: 26px; display: flex; align-items: center; padding-left: 6px; gap: 10px; }
.wider { margin-right: 5px; }
.svc { margin-left: -3px; }
.userzone { margin-left: auto; display: flex; align-items: center; height: 24px; }
.blank { width: 24px; height: 24px; background: #f5f5f5; margin-right: 2px; }
.userb { gap: 4px; background: #f5f5f5; height: 24px; padding: 0 6px 0 4px; }
.userb em { margin-left: 8px; margin-right: 6px; }
.userb .dd { margin: 0 0 0 5px; }

.t { display: inline-flex; align-items: center; gap: 3px; white-space: nowrap; }
.i { width: 16px; height: 16px; margin-right: 1px; }
.dd { display: inline-block; width: 0; height: 0; border: 3px solid transparent; border-top: 3px solid #222; border-bottom: 0; margin-left: 4px; flex: none; }
.dd.off { border-top-color: #aaa; }
.dis { color: #9a9a9a; }
.sp { display: inline-block; width: 1px; height: 18px; background: #b8b8b8; flex: none; margin-right: -1px; }
.grip { display: inline-block; width: 2px; height: 16px; flex: none; margin-right: -2px; background: repeating-linear-gradient(#9a9a9a 0 2px, transparent 2px 4px); }

.band { display: inline-flex; align-items: center; gap: 7px; background: #f5f5f5; height: 26px; padding: 0 5px 0 1px; }
.band.tight { padding-left: 5px; }
.maintb { height: 32px; display: flex; align-items: center; }
.b1 { width: 160px; gap: 3px; padding-left: 6px; margin-right: 2px; }
.b1 .dd { margin-left: 2px; margin-right: 2px; }
.b1 .sp { height: 24px; margin: 0 6px 0 4px; }
.b2 { padding-left: 3px; width: 866px; }
.b3 { padding-left: 5px; margin-left: 2px; gap: 6px; }
.b2 .t { gap: 3px; }
.sigma { width: 16px; font: 700 14px/16px "Liberation Sans", sans-serif; text-align: center; margin-right: 1px; }

.workspace { height: 937px; display: flex; align-items: stretch; }

.phead { height: 15px; display: flex; align-items: center; font-size: 13px; line-height: 15px; background: #f0f0f0; border: 1px solid #8c8c8c; border-width: 1px 1px 1px 0; overflow: hidden; }
.phead span { flex: 1; white-space: nowrap; }
.phead.blue { background: #0a4fe0; color: #fff; border: 0; height: 15px; }
.pin { width: 10px; height: 12px; margin-right: 14px; color: #111; }
.blue .pin { color: #fff; }
.close { width: 9px; height: 9px; margin-right: 7px; color: #111; }
.close.boxed { width: 17px; height: 13px; margin-right: 0; color: #fff; border: 1px solid #fff; padding: 1px 3px; }

.nav { width: 166px; margin-right: 4px; display: flex; flex-direction: column; }
.navbtn { display: block; width: 164px; height: 22px; margin: 1px 0 0 1px; padding: 0; border: 0; border-bottom: 1px solid #9a9a9a; background: linear-gradient(#f6f6f6, #ececec); font: inherit; color: #111; }
.navtools { height: 26px; margin: 1px 0 0 1px; width: 164px; background: linear-gradient(#f8f8f8, #e6e6e6); display: flex; align-items: center; padding-left: 6px; gap: 5px; }
.nt1 { width: 18px; height: 16px; }
.nt2 { width: 18px; height: 12px; }
.tree { flex: 1; margin-left: 2px; width: 163px; background: #fff; border: 1px solid #888; display: flex; flex-direction: column; overflow: hidden; }
.rows { flex: 1; padding-top: 1px; background: repeating-linear-gradient(#888 0 1px, transparent 1px 2px) 12px 9px / 1px 480px no-repeat; overflow: hidden; }
.n { height: 16px; display: flex; align-items: center; white-space: nowrap; }
.l1 { padding-left: 8px; gap: 0; background: repeating-linear-gradient(to right, #888 0 1px, transparent 1px 2px) 21px 8px / 4px 1px no-repeat; }
.l2 { padding-left: 42px; background: repeating-linear-gradient(#888 0 1px, transparent 1px 2px) 32px 0 / 1px 100% no-repeat, repeating-linear-gradient(to right, #888 0 1px, transparent 1px 2px) 32px 8px / 10px 1px no-repeat; }
.l2.last { background-size: 1px 8px, 10px 1px; }
.ch { width: 9px; height: 9px; }
.fi { width: 15px; height: 15px; margin: 0 5px 0 7px; }
.ni { width: 16px; height: 16px; margin-right: 4px; }
.nw { width: 38px; height: 15px; margin-left: 6px; }
.sel span { background: #d9d9d9; padding: 0 5px; margin-left: -5px; height: 16px; }
.hscroll { height: 16px; flex: none; margin: 0 1px 1px; display: flex; align-items: center; justify-content: space-between; background: #f0f0f0; padding: 0 7px 0 5px; }
.sa { width: 10px; height: 10px; }
.thumb { width: 110px; height: 16px; background: #c8c8c8; }
.gapt { margin-top: 2px; }

.docs { width: 310px; margin-right: 4px; display: flex; flex-direction: column; }
.tabs { height: 20px; display: flex; align-items: flex-end; padding-left: 1px; }
.tab { height: 17px; padding: 0 3px; width: 92px; background: #f0f0f0; border: 1px solid #ddd; border-bottom: 0; line-height: 17px; text-align: center; }
.tab.on { height: 20px; width: 86px; background: #fff; border-color: #e0e0e0; line-height: 18px; margin-right: 0; }
.docbody { height: 415px; margin-left: 1px; width: 308px; background: #f5f5f5; border: 1px solid #dcdcdc; padding: 4px 3px 2px; display: flex; flex-direction: column; }
.doctools { height: 24px; display: flex; gap: 2px; flex: none; }
.dbtn { height: 23px; width: 56px; padding: 0; border: 1px solid #e4e4e4; border-bottom-color: #a0a0a0; background: #f5f5f5; font: inherit; color: #111; }
.dbtn.w1 { width: 58px; margin-right: -1px; }
.dbtn.w2 { width: 12px; display: flex; align-items: center; justify-content: center; }
.w2 .dd { margin: 0; }
.more { margin-left: auto; width: 12px; height: 23px; padding: 0; border: 1px solid #ccc; border-bottom-color: #888; background: #eee; font: 700 12px/10px "Liberation Sans", sans-serif; }
.tablewrap { flex: 1; background: #fff; border: 1px solid #b8b8b8; padding: 1px 0 0 1px; margin-top: 1px; }

table { border-collapse: collapse; table-layout: fixed; }
td, th { padding: 0; height: 19px; white-space: nowrap; overflow: hidden; font-weight: 400; border: 1px solid #d2d2d2; border-width: 0 1px 1px 0; }
.c1 { width: 21px; } .c2 { width: 151px; } .c3 { width: 55px; }
.dt { width: 227px; }
.dt th { height: 26px; background: linear-gradient(#fbfbfb, #e6e6e6); font-size: 12px; text-align: left; padding-left: 3px; }
.dt th.or, .pt th.or { background: linear-gradient(#fbe3b0, #f1bc62); color: #6e0f78; text-align: center; padding: 0; }
.ix { background: linear-gradient(#fbfbfb, #e8e8e8); text-align: center; font: 10px/12px "Liberation Mono", monospace; color: #111; }
.sc { font: 10px/12px "Liberation Mono", monospace; padding-left: 2px; }
.nm { position: relative; }
.ch1 { padding-left: 30px; background-image: linear-gradient(#bdbdbd, #bdbdbd), linear-gradient(#bdbdbd, #bdbdbd); background-repeat: no-repeat; background-size: 1px 100%, 17px 1px; background-position: 8px 0, 8px 9px; }
.ch1.end { background-size: 1px 10px, 17px 1px; }
.root { padding-left: 2px; }
.box { display: inline-block; width: 13px; height: 13px; border: 1px solid #bbb; margin-right: 5px; vertical-align: -2px; background: linear-gradient(#333, #333) center / 7px 1px no-repeat; }
.indent { display: inline-block; width: 18px; }
.red .nm { background-color: #ff0000; color: #5e0000; }
.yel td { background-color: #ffff00; }
.yel .ix { background: linear-gradient(#fbfbfb, #e8e8e8); }
.cur .ix { background: #f9d08a; color: #6e0f78; }
.cur .nm { background-color: #dbe81f; outline: 3px solid #6e6e6e; outline-offset: -3px; overflow: visible; }
.handle { position: absolute; right: -3px; bottom: -3px; width: 5px; height: 5px; background: #fff; border: 1px solid #555; }

.cadh { margin-top: 9px; flex: none; }
.layers { flex: 1; background: #fff; border: 1px solid #aaa; margin-top: 1px; padding: 2px 0 0 9px; }
.lr { height: 14px; display: flex; align-items: center; white-space: nowrap; }
.lr .ch { margin-right: 4px; }
.cb { display: inline-block; width: 13px; height: 13px; border: 1px solid #444; background: #fff; flex: none; }
.cbx { width: 13px; height: 13px; margin-right: 3px; }

.center { width: 1097px; margin-right: 3px; display: flex; flex-direction: column; }
.ctools { height: 165px; padding-left: 2px; display: grid; grid-template-rows: 25px 32px 28px 28px 26px 26px; }
.trow { display: flex; align-items: center; gap: 4px; }
.trow .band { height: 24px; }
.r1 .t { gap: 2.5px; }
.act + .dd { margin-left: -6px; }
.act + .sp { margin-left: -3px; margin-right: -3px; }
.ndd .dd { margin-left: 2px; margin-right: -2px; }
.combo { display: inline-flex; align-items: center; justify-content: space-between; background: #fff; height: 24px; padding-left: 4px; font-family: "Liberation Sans", "Noto Sans CJK SC", sans-serif; white-space: nowrap; margin-right: -4px; }
.c58 { width: 58px; } .c68 { width: 68px; } .c69 { width: 69px; } .c56 { width: 56px; margin-right: -2px; } .c57 { width: 57px; }
.cdrop { width: 10px; height: 100%; background: #f0f0f0; position: relative; flex: none; }
.cdrop::after { content: ""; position: absolute; left: 2px; top: 10px; border: 3px solid transparent; border-top-color: #222; border-bottom: 0; }
.act { background: #d8eaf9; outline: 1px solid #0078d7; outline-offset: -1px; height: 24px; padding: 0 4px; }
.canvas { width: 1097px; height: 741px; background: #000; display: block; }
.cw text { fill: #e6e6e6; font: 15px "Liberation Sans", sans-serif; }
.cbig text { fill: #d8d8d8; font: 18px "Liberation Sans", sans-serif; }
.axt text { fill: #d8d8d8; font: 700 12px "Liberation Sans", sans-serif; }
.rl text { fill: #a05a5a; font: 7px "Liberation Mono", monospace; }
.yl text { fill: #9c9a00; font: 7px "Liberation Mono", monospace; }

.btools { height: 32px; display: flex; align-items: center; gap: 4px; padding-left: 2px; background: #f0f0f0; }
.btools .band { height: 30px; }
.tgroup { display: inline-flex; margin-left: -3px; }
.tgroup .act { height: 25px; padding: 0 3px; }
.tgroup + .t { margin-left: -2px; }
.small { gap: 0; }
.small .combo { margin-right: 5px; }
.small .sp { margin-right: 1px; }
.lab { white-space: nowrap; flex: none; }
.l20 { width: 20px; }
.l46 { width: 46px; }
.l27 { width: 27px; }
.lab.pad { margin: 0 4px 0 7px; }
.deg { margin-left: 5px; }
.num { width: 58px; height: 24px; border: 1px solid #9a9a9a; background: #f0f0f0; color: #888; text-align: right; padding-right: 14px; line-height: 22px; position: relative; flex: none; font-family: "Liberation Sans", sans-serif; font-size: 13px; }
.num.wide { width: 66px; }
.spin { position: absolute; right: 3px; top: 4px; width: 0; height: 0; border: 3px solid transparent; border-bottom-color: #666; border-top: 0; }
.spin::after { content: ""; position: absolute; left: -3px; top: 9px; border: 3px solid transparent; border-top-color: #666; border-bottom: 0; }

.props { width: 336px; display: flex; flex-direction: column; }
.propbody { flex: 1; margin: 0 0 1px; background: #fff; border: 1px solid #aaa; padding: 1px 0 0 2px; }
.pt { width: 331px; }
.p1 { width: 21px; } .p2 { width: 120px; } .p3 { width: 159px; } .p4 { width: 31px; }
.pt th { height: 24px; background: linear-gradient(#fbfbfb, #e8e8e8); }
.pt .nm { padding-left: 20px; }
.pt .v { padding-left: 2px; }
.pt td:last-child { text-align: center; }
.pt .cb { vertical-align: -3px; }
.bl { color: #0000e8; }
.gr { color: #8a8a8a; }
.pt .gr { padding-left: 3px; }
.plus { display: inline-block; width: 13px; height: 13px; margin-right: 4px; vertical-align: -2px; border: 1px solid #bbb; background: linear-gradient(#333, #333) center / 7px 1px no-repeat, linear-gradient(#333, #333) center / 1px 7px no-repeat, #fff; }
.psel .ix { background: #f9d08a; color: #6e0f78; }
.psel .nm { background: #0078d7; color: #fff; }
.psel .v { background: #d6e8f8; }

.status { height: 20px; margin-top: 2px; display: flex; gap: 3px; }
.status span { height: 20px; border: 1px solid #dedede; border-bottom-color: #ccc; line-height: 18px; padding-left: 2px; white-space: nowrap; overflow: hidden; }
.s1 { width: 148px; } .s2 { width: 77px; } .s3 { width: 97px; } .s4 { width: 47px; } .s5 { width: 1465px; } .s6 { width: 70px; }
.taskbar { height: 8px; background: #000; position: relative; overflow: hidden; }
.tb1 { position: absolute; left: 48px; width: 344px; height: 8px; background: #333; }
.tb2 { position: absolute; left: 639px; width: 49px; height: 8px; background: #333; }
.clock { position: absolute; left: 1866px; top: 3px; color: #eee; font: 11px/12px "Liberation Sans", sans-serif; }

.netw { position: absolute; left: 1753px; top: 879px; width: 121px; height: 60px; }
.dial { position: absolute; left: 0; top: 0; width: 60px; height: 60px; }
.d1 { fill: #e8eef2; font: 300 23px "Lato", "Liberation Sans", sans-serif; }
.d2 { fill: #e8eef2; font: 11px "Lato", "Liberation Sans", sans-serif; }
.pill { position: absolute; left: 30px; top: 8px; width: 91px; height: 45px; background: linear-gradient(#4f535e, #434751); border-radius: 0 22px 22px 0; padding: 2px 9px 0 31px; box-shadow: 0 1px 3px #aaa; }
.rate { display: flex; align-items: center; justify-content: space-between; height: 20px; color: #dcdfe4; font: 11px/20px "Liberation Sans", sans-serif; letter-spacing: 1px; }
.rate + .rate { border-top: 1px solid #383b44; }
.rate svg { width: 10px; height: 10px; }
.ball { position: absolute; left: 1900px; top: 887px; width: 36px; height: 36px; border-radius: 50%; background: radial-gradient(circle at 40% 30%, #7fe38c, #34b84a); border: 2px solid #dfe6e0; color: #fff; font: 700 13px/32px "Liberation Sans", sans-serif; padding-left: 4px; box-shadow: 0 0 2px #888; }
```
